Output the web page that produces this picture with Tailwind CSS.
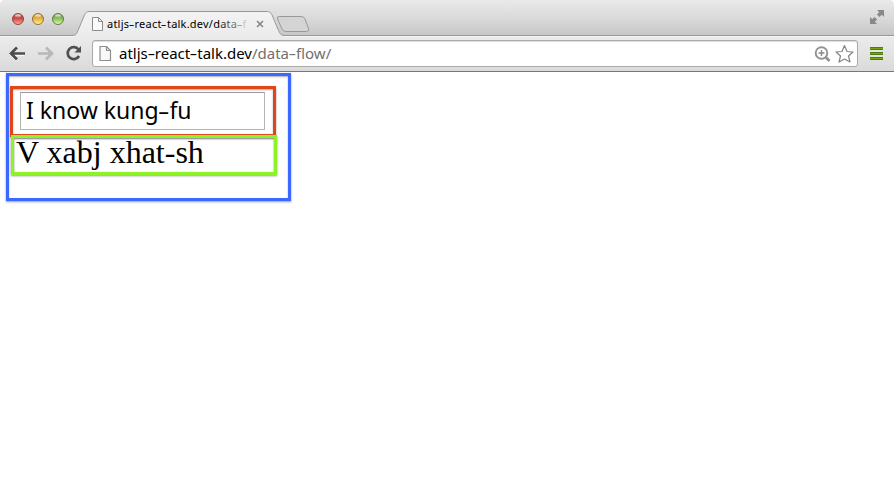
<!DOCTYPE html>
<html lang="en">
<head>
<meta charset="utf-8">
<title>atljs-react-talk.dev/data-flow</title>
<script src="https://cdn.jsdelivr.net/npm/@tailwindcss/browser@4"></script>
</head>
<body class="bg-white w-[894px] h-[482px] overflow-hidden font-['Noto_Sans',sans-serif] text-black">
<header class="relative h-[72px] border-b border-[#777]">
  <svg class="absolute inset-0" width="894" height="71" viewBox="0 0 894 71">
    <defs>
      <linearGradient id="strip" x1="0" y1="0" x2="0" y2="1"><stop offset="0" stop-color="#e9e9e9"/><stop offset=".5" stop-color="#dadada"/><stop offset="1" stop-color="#c6c6c6"/></linearGradient>
      <linearGradient id="bar" gradientUnits="userSpaceOnUse" x1="0" y1="11" x2="0" y2="71"><stop offset="0" stop-color="#f3f3f3"/><stop offset=".45" stop-color="#ebebeb"/><stop offset="1" stop-color="#dadada"/></linearGradient>
      <linearGradient id="red" x1="0" y1="0" x2="0" y2="1"><stop offset="0" stop-color="#a93c38"/><stop offset=".45" stop-color="#d04a45"/><stop offset="1" stop-color="#ffa8a0"/></linearGradient>
      <linearGradient id="yellow" x1="0" y1="0" x2="0" y2="1"><stop offset="0" stop-color="#bd852b"/><stop offset=".45" stop-color="#e5b03a"/><stop offset="1" stop-color="#fff49b"/></linearGradient>
      <linearGradient id="green" x1="0" y1="0" x2="0" y2="1"><stop offset="0" stop-color="#5c8b39"/><stop offset=".45" stop-color="#8bbd5a"/><stop offset="1" stop-color="#dcffa9"/></linearGradient>
      <linearGradient id="shine" x1="0" y1="0" x2="0" y2="1"><stop offset="0" stop-color="#fff" stop-opacity=".95"/><stop offset="1" stop-color="#fff" stop-opacity=".1"/></linearGradient>
    </defs>
    <path d="M0 36V5Q0 0 5 0H889Q894 0 894 5V36Z" fill="url(#strip)"/>
    <path d="M0 71V35.500H72C76 35.500 76.500 34 78 30.500L84 16C85.500 12.500 86.500 11.500 90 11.500H266C270 11.500 271 12.500 272.500 16L278.500 30.500C280 34 281 35.500 285 35.500H894V71Z" fill="url(#bar)"/>
    <path d="M0 35.500H72C76 35.500 76.500 34 78 30.500L84 16C85.500 12.500 86.500 11.500 90 11.500H266C270 11.500 271 12.500 272.500 16L278.500 30.500C280 34 281 35.500 285 35.500H894" fill="none" stroke="#989898"/>
    <path d="M0 36.500H74M284 36.500H894" stroke="#f5f5f5"/>
    <path d="M279 16.500H301Q304 16.500 305 19L308.500 28.500Q309.500 31.500 306.500 31.500H286Q283 31.500 282 29L277.500 19Q276.500 16.500 279 16.500Z" fill="#d4d4d4" stroke="#989898"/>
    <g stroke-width="1">
      <circle cx="18" cy="19" r="5.500" fill="url(#red)" stroke="#8f4a46"/>
      <circle cx="38" cy="19" r="5.500" fill="url(#yellow)" stroke="#94703b"/>
      <circle cx="58" cy="19" r="5.500" fill="url(#green)" stroke="#5e7d48"/>
    </g>
    <g fill="url(#shine)"><ellipse cx="18" cy="16" rx="3" ry="1.700"/><ellipse cx="38" cy="16" rx="3" ry="1.700"/><ellipse cx="58" cy="16" rx="3" ry="1.700"/></g>
    <path d="M92.500 17.500H98.500L102.500 21.500V30.500H92.500ZM98.500 17.500V21.500H102.500" fill="#fafafa" stroke="#8d8d8d"/>
    <path d="M257 21L263 27M263 21L257 27" stroke="#858585" stroke-width="1.600"/>
    <path d="M877 10H884V17L881.800 14.800L879.500 17.100L876.900 14.500L879.200 12.200ZM870 17L872.200 19.200L874.500 16.900L877.100 19.500L874.800 21.800L877 24H870Z" fill="#888"/>
    <path d="M24.500 53.500H11.500M17 47.500L11 53.500L17 59.500" fill="none" stroke="#fff" stroke-width="2.500" transform="translate(0 1)"/>
    <path d="M25 53.500H11.500M17 47.500L11 53.500L17 59.500" fill="none" stroke="#4d4d4d" stroke-width="2.700"/>
    <path d="M38 53.500H51.500M46 47.500L52 53.500L46 59.500" fill="none" stroke="#b8b8b8" stroke-width="2.700"/>
    <path d="M78.500 49.500A6 6 0 1 0 79 56" fill="none" stroke="#505050" stroke-width="2.700"/>
    <path d="M81 46V52.500H74.500Z" fill="#505050"/>
    <path d="M870 48.500H883M870 53.500H883M870 58.500H883" stroke="#507d12" stroke-width="3"/>
    <path d="M870 48.500H883M870 53.500H883M870 58.500H883" stroke="#77a512" stroke-width="1"/>
  </svg>
  <div class="relative h-9 pl-[107px] pt-[16px]">
    <div class="w-[142px] whitespace-nowrap text-[11px] leading-4 tracking-[0.220px]">atljs<span class="inline-block scale-x-160 mx-[0.8px]">-</span>react<span class="inline-block scale-x-160 mx-[0.8px]">-</span>talk.dev/d<span class="text-[#333]">a</span><span class="text-[#555]">t</span><span class="text-[#777]">a</span><span class="inline-block scale-x-160 mx-[0.8px] text-[#999]">-</span><span class="text-[#c8c8c8]">f</span></div>
  </div>
  <div class="relative mt-1 ml-[92px] flex h-[27px] w-[766px] items-center rounded-[3px] border border-[#aaa] bg-white pl-[6px] pr-px shadow-[inset_0_1px_1px_#ddd]">
    <svg width="13" height="16" viewBox="0 0 13 16"><path d="M1 .5H7.500L11.500 4.500V14.500H1ZM7.500 .5V4.500H11.500" fill="#f8f8f8" stroke="#8d8d8d" stroke-width="1.200"/></svg>
    <div class="ml-[7px] mb-[2px] grow whitespace-nowrap text-[15px] leading-5">atljs<span class="inline-block scale-x-160 mx-[1.1px]">-</span>react<span class="inline-block scale-x-160 mx-[1.1px]">-</span>talk.dev<span class="text-[#707070]">/data<span class="inline-block scale-x-160 mx-[1.1px]">-</span>flow/</span></div>
    <svg width="42" height="20" viewBox="0 0 42 20" fill="none"><circle cx="7.500" cy="9" r="5.800" stroke="#929292" stroke-width="1.900"/><path d="M4.500 9H10.500M7.500 6V12" stroke="#888" stroke-width="1.400"/><path d="M12 13.500L15.500 17" stroke="#929292" stroke-width="2.600"/><path d="M30.500 1.500L33 7.500L39 8L34.500 12L36 18L30.500 15L25 18L26.500 12L22 8L28 7.500Z" stroke="#858585" stroke-width="1.200" stroke-linejoin="round"/></svg>
  </div>
</header>
<main class="pl-1.5 pt-px">
  <section class="h-[128px] w-[285px] border-3 border-[#3b68ff] pt-[10px] pl-px shadow-[0_1px_2px_#999,inset_0_1px_2px_#aaa]">
    <div class="h-[51px] w-[266px] border-3 border-[#df4618] pt-[3px] pl-[7px] shadow-[0_1px_2px_#999,inset_0_1px_2px_#aaa]">
      <div class="h-[38px] w-[245px] border border-[#b5b5b5] border-t-[#999] pl-[5px] text-[23px] leading-[35px] whitespace-nowrap">I know kung<span class="inline-block scale-x-160 mx-[1.7px]">-</span>fu</div>
    </div>
    <div class="relative -mt-[2px] ml-px h-[40px] w-[266px] border-3 border-[#8df324] pl-[2px] font-['Liberation_Serif',serif] text-[32px] leading-[28px] whitespace-nowrap shadow-[0_1px_2px_#999,inset_0_1px_2px_#888]">V xabj xhat-sh</div>
  </section>
</main>
</body>
</html>
